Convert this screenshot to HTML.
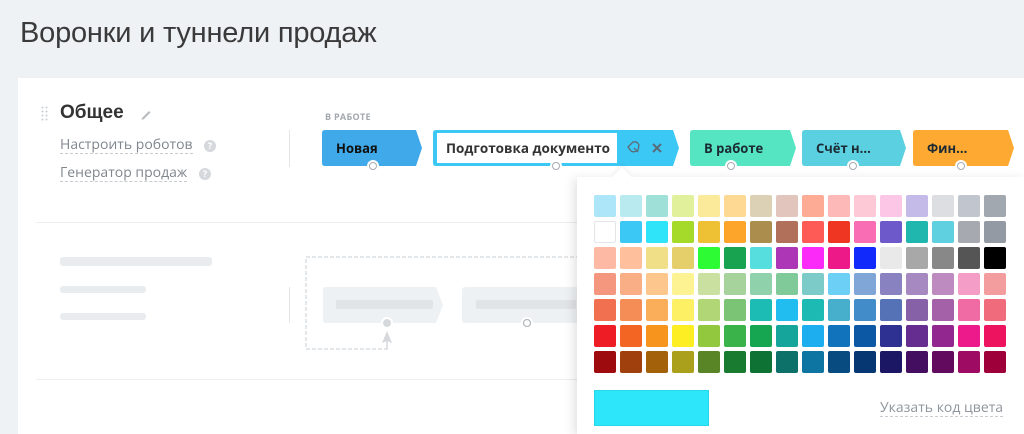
<!DOCTYPE html>
<html><head><meta charset="utf-8"><style>
*{box-sizing:border-box;margin:0;padding:0}
html,body{width:1024px;height:434px;overflow:hidden}
body{background:#eef2f4;font-family:"Open Sans","Liberation Sans","DejaVu Sans",sans-serif;position:relative}
.abs{position:absolute}
h1{position:absolute;left:20px;top:17px;font-size:29px;font-weight:300;color:#3a3a3a;letter-spacing:-0.2px;font-family:"Liberation Sans",sans-serif}
.card{position:absolute;left:18px;top:78px;width:1006px;height:356px;background:#fff}
.lnk{position:absolute;font-size:14px;color:#80868e;border-bottom:1px dashed #c8ccd0;line-height:17px}
.q{position:absolute;width:12px;height:12px;border-radius:50%;background:#d5d8dc;color:#fff;font-size:9px;text-align:center;line-height:12px;font-weight:bold}
.st{position:absolute;top:130px;height:36px;font-size:13px;font-weight:bold;color:#1b2a33;line-height:36px;padding-left:14px}
.circ{position:absolute;width:12px;height:12px;border-radius:50%;background:#fff;top:160px}
.circ:after{content:"";position:absolute;left:2px;top:2px;width:8px;height:8px;border-radius:50%;border:1.5px solid #a7acb2;box-sizing:border-box}
.sw{position:absolute;width:22px;height:22px;border-radius:2px}
.bar{position:absolute;background:#e9ecef;border-radius:3px}
</style></head><body>
<h1>Воронки и туннели продаж</h1>
<div class="card"></div>
<svg class="abs" style="left:41px;top:106px" width="8" height="16"><g fill="#c9cdd1"><circle cx="1.5" cy="1.5" r="1"/><circle cx="5.5" cy="1.5" r="1"/><circle cx="1.5" cy="5.5" r="1"/><circle cx="5.5" cy="5.5" r="1"/><circle cx="1.5" cy="9.5" r="1"/><circle cx="5.5" cy="9.5" r="1"/><circle cx="1.5" cy="13.5" r="1"/><circle cx="5.5" cy="13.5" r="1"/></g></svg>
<div class="abs" style="left:60px;top:102px;font-size:19px;font-weight:bold;color:#333;font-family:'Liberation Sans',sans-serif">Общее</div>
<svg class="abs" style="left:140px;top:108px" width="12" height="12"><path d="M2 10 L9 3 L10.5 4.5 L3.5 11.5 L1.5 11.5Z" fill="#b8bcc0"/></svg>
<div class="lnk" style="left:60px;top:136px">Настроить роботов</div>
<div class="q" style="left:204px;top:140px">?</div>
<div class="lnk" style="left:60px;top:164px">Генератор продаж</div>
<div class="q" style="left:199px;top:168px">?</div>
<div class="abs" style="left:289px;top:130px;width:1px;height:37px;background:#e3e6e8"></div>
<div class="abs" style="left:325px;top:110px;font-size:9px;font-weight:bold;color:#a3a9af;letter-spacing:.3px">В РАБОТЕ</div>

<svg class="abs" style="left:0;top:0" width="1024" height="200">
<path d="M322 133 Q322 130 325 130 L416 130 L422 148 L416 166 L325 166 Q322 166 322 163Z" fill="#3fa9ea"/>
<path d="M433 133 Q433 130 436 130 L673 130 L679 148 L673 166 L436 166 Q433 166 433 163Z" fill="#3bc8f5"/>
<rect x="437" y="133" width="180" height="30" fill="#fff"/>
<path d="M690 133 Q690 130 693 130 L790 130 L796 148 L790 166 L693 166 Q690 166 690 163Z" fill="#55e5c2"/>
<path d="M802 133 Q802 130 805 130 L900 130 L906 148 L900 166 L805 166 Q802 166 802 163Z" fill="#5bd0e0"/>
<path d="M913 133 Q913 130 916 130 L1008 130 L1014 148 L1008 166 L916 166 Q913 166 913 163Z" fill="#fda932"/>
<g stroke="#5a6b78" stroke-width="1.3" fill="none"><path d="M628 147 L633 142 Q637 141 639 145 L638 150 Q634 153 631 151Z"/><path d="M634 148 L638 152"/></g>
<g stroke="#5a6b78" stroke-width="2"><path d="M653 144 L661 152 M661 144 L653 152"/></g>
</svg>
<div class="st" style="left:322px;color:#111">Новая</div>
<div class="st" style="left:433px;padding-left:13px;color:#333;font-size:13.5px">Подготовка документо</div>
<div class="st" style="left:690px">В работе</div>
<div class="st" style="left:802px">Счёт н...</div>
<div class="st" style="left:913px">Фин...</div>
<div class="circ" style="left:367px"></div>
<div class="circ" style="left:550px"></div>
<div class="circ" style="left:725px"></div>
<div class="circ" style="left:847px"></div>
<div class="circ" style="left:955px"></div>

<div class="abs" style="left:36px;top:222px;width:560px;height:1px;background:#eceef0"></div>
<div class="abs" style="left:36px;top:379px;width:560px;height:1px;background:#eceef0"></div>
<div class="bar" style="left:60px;top:257px;width:152px;height:9px"></div>
<div class="bar" style="left:60px;top:286px;width:86px;height:7px"></div>
<div class="bar" style="left:60px;top:313px;width:86px;height:7px"></div>
<div class="abs" style="left:289px;top:287px;width:1px;height:36px;background:#e3e6e8"></div>
<svg class="abs" style="left:0;top:0" width="600" height="434">
<path d="M388 349 L306 349 L306 257 L600 257" fill="none" stroke="#dcdfe2" stroke-width="1.5" stroke-dasharray="4 2"/>
<path d="M323 290 Q323 287 326 287 L436 287 L443 305 L436 323 L326 323 Q323 323 323 320Z" fill="#eef1f3"/>
<path d="M462 290 Q462 287 465 287 L600 287 L600 323 L465 323 Q462 323 462 320Z" fill="#eef1f3"/>
<rect x="336" y="300" width="97" height="9" rx="2" fill="#e1e4e7"/>
<rect x="476" y="300" width="100" height="9" rx="2" fill="#e1e4e7"/>
<circle cx="387" cy="323" r="6" fill="#fff"/><circle cx="387" cy="323" r="4" fill="#d6d9dc"/>
<circle cx="527" cy="323" r="6" fill="#fff"/><circle cx="527" cy="323" r="3.5" fill="none" stroke="#b4b9be" stroke-width="1.3"/>
<path d="M387 331 L382 343 L387 341 L392 343Z" fill="#d6d9dc"/><path d="M387 340 L387 349" stroke="#d6d9dc" stroke-width="1.5"/>
</svg>

<div class="abs" style="left:577px;top:177px;width:447px;height:257px;background:#fff;box-shadow:-3px 2px 10px rgba(0,0,0,.12)"></div>
<div class="abs" style="left:615px;top:170px;width:14px;height:14px;background:#fff;transform:rotate(45deg);box-shadow:-2px -2px 4px rgba(0,0,0,.05)"></div>
<div id="g"></div>
<div class="abs" style="left:594px;top:390px;width:115px;height:36px;background:#2ee6fa;border:1px solid #28d6ea"></div>
<div class="lnk" style="left:880px;top:399px;font-size:14px;color:#8f959c">Указать код цвета</div>
<script>
var rows=[
"#ade6f8 #b9eaef #9fe0d9 #e1f09b #fcea9b #fdd994 #ddd1b5 #e2c6bd #fdab94 #fdb8b8 #fdc9d6 #fcc6e6 #c5bbe9 #dcdee2 #c1c6ce #a1a8b0",
"#ffffff #3bc8f5 #2fe3f9 #a5d92a #eec034 #fda52b #ab8e4e #b1705a #ff5b56 #ef3623 #f86db3 #6d59c9 #20b7ae #5fd0df #a6aab0 #939aa4",
"#fdb9a3 #fec09c #f1df88 #e5cf6a #2dfc35 #18a350 #56dedf #ac36b5 #fc2af8 #ee1989 #1129fa #e9e9e9 #a8a8a8 #888888 #555555 #000000",
"#f5977e #f9ae85 #fdc68d #fef393 #c9e0a0 #a6d29c #8ed1ab #80c999 #7ccbc8 #6bcff6 #7fa6d6 #8883c0 #a589c0 #be8bc0 #f49dc6 #f49d9e",
"#f0704f #f58d57 #fbae59 #fdf065 #b0d675 #7bc475 #1cbcb4 #21bdf0 #1cbab3 #47afcb #428cca #5472b5 #8661a8 #a461a8 #f06ba3 #f06c7c",
"#ee1c25 #f26522 #f7941d #fcee23 #92c83e #3ab44a #16a550 #15a59a #1daef0 #1073bc #0d58a5 #2e3191 #652d90 #92278f #ec1a8b #ee135e",
"#9e0b0f #a0410d #a3620a #aba01c #598527 #197b30 #0d7234 #0d716a #0e75a3 #074b80 #063772 #1c1765 #430e5f #620a5d #9d0b62 #9e0039"];
var h="";rows.forEach(function(r,i){r.split(" ").forEach(function(c,j){h+='<div class="sw" style="left:'+(594+j*26)+'px;top:'+(195+i*26)+'px;background:'+c+(c=="#ffffff"?';border:1px solid #e3e5e8':'')+'"></div>';});});
document.getElementById("g").innerHTML=h;
</script>
</body></html>
